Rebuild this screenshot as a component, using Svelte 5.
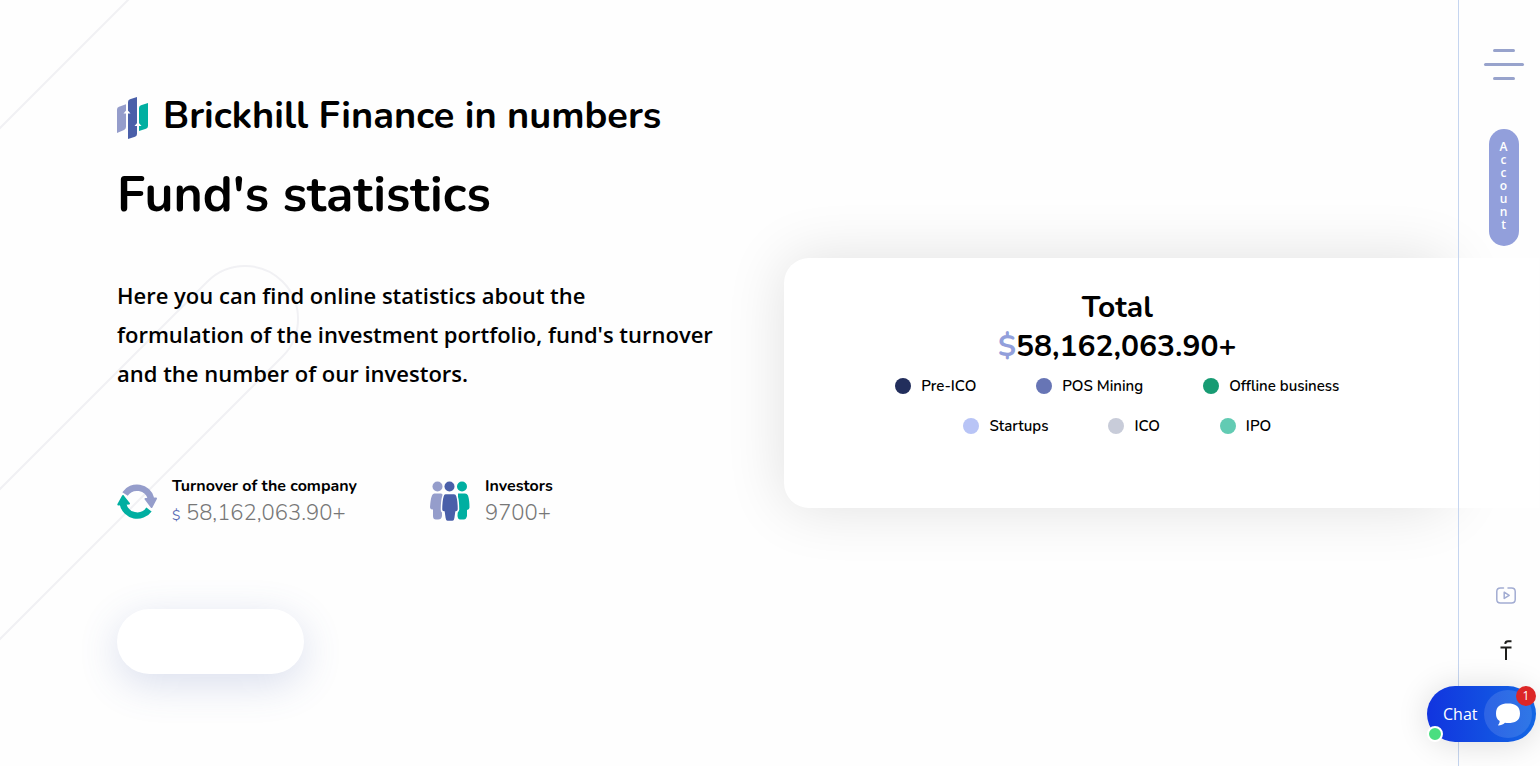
<script>
  const legend = [
    [
      { label: 'Pre-ICO', color: '#222e5c' },
      { label: 'POS Mining', color: '#6775b5' },
      { label: 'Offline business', color: '#179b73' }
    ],
    [
      { label: 'Startups', color: '#b8c4f6' },
      { label: 'ICO', color: '#c8ccd9' },
      { label: 'IPO', color: '#62cbb3' }
    ]
  ];
</script>

<div class="page">
  <svg class="backdrop" width="320" height="680" viewBox="0 0 320 680" aria-hidden="true">
    <path d="M-4 132 132 -4M-4 493 207.500 281.500A53 53 0 0 1 282.500 356.500L-4 643" fill="none" stroke="#f1f1f4" stroke-width="2" />
  </svg>

  <main>
    <section class="intro">
      <h2>
        <svg width="31" height="42" viewBox="0 0 31 42" aria-hidden="true">
          <path d="M0 12.500Q0 10.500 2 9.700L9 7.200V30Q9 32 7 33L0 36Z" fill="#959dcb" />
          <path d="M11 5Q11 3 13 2.300L20 0V37Q20 39 18 39.800L11 42Z" fill="#4a5fa9" />
          <path d="M22 11Q22 9 24 8.300L31 6V29Q31 31 29 31.700L22 34Z" fill="#00afa1" />
          <path d="M10 12.500 13.500 16.500H11V20H9V16.500H6.500ZM21 25 24.500 29H22V33H20V29H17.500Z" fill="#fff" />
        </svg>
        Brickhill Finance in numbers
      </h2>
      <h1>Fund's statistics</h1>
      <p>Here you can find online statistics about the formulation of the investment portfolio, fund's turnover and the number of our investors.</p>
      <div class="stats">
        <div class="stat">
          <svg width="40" height="42" viewBox="0 0 40 42" aria-hidden="true">
            <g fill="none" stroke-width="6.500">
              <path d="M8 14A14.500 14.500 0 0 1 34 18.500" stroke="#959dcb" />
              <path d="M6 24A14.500 14.500 0 0 0 32 29.500" stroke="#00afa1" />
            </g>
            <g stroke-width="2" stroke-linejoin="round">
              <path d="M28.500 19 39 18.500 34.500 27Z" fill="#959dcb" stroke="#959dcb" />
              <path d="M1.300 24.500 6 16 12 23.500Z" fill="#00afa1" stroke="#00afa1" />
            </g>
          </svg>
          <div>
            <h3>Turnover of the company</h3>
            <div class="value"><small>$</small> 58,162,063.90+</div>
          </div>
        </div>
        <div class="stat">
          <svg width="40" height="42" viewBox="0 0 40 42" aria-hidden="true">
            <g fill="#959dcb"><circle cx="7.500" cy="6.500" r="5" /><path d="M4.500 13.500H11Q13 13.500 13 16L11 28 12 33V36Q11.500 39.500 8 39.500H6Q3 39.500 3 36V29.500Q0 29.500 0 27 .5 19 2 15.500 2.800 13.500 4.500 13.500Z" /></g>
            <g fill="#00afa1"><circle cx="32" cy="6.500" r="5" /><path d="M28 13.500H35Q37 13.500 38 15.500 39.500 20 39.500 27.500 39.500 29.500 37 30V36Q36 39.500 34 39.500H30Q28 39.500 27.500 36L28 28Z" /></g>
            <path d="M15.500 13.500H24Q26.500 13.500 27 16 28.500 21 28.500 29.500 28 32 26 32L25 39Q24.500 41.500 22.500 41.500H17.500Q15.500 41.500 15 39L14 32Q11.500 32 11.500 29.500 11.500 21 13 16 13.500 13.500 15.500 13.500Z" fill="#4a5fa9" stroke="#fff" stroke-width="1.500" />
            <circle cx="19.500" cy="6.500" r="5" fill="#4a5fa9" />
          </svg>
          <div>
            <h3>Investors</h3>
            <div class="value">9700+</div>
          </div>
        </div>
      </div>
      <button class="more" type="button" aria-label="More statistics"></button>
    </section>

    <section class="card">
      <div class="total">Total</div>
      <div class="total"><span>$</span>58,162,063.90+</div>
      {#each legend as row}
        <ul>
          {#each row as item}
            <li><i style:background={item.color}></i>{item.label}</li>
          {/each}
        </ul>
      {/each}
    </section>
  </main>

  <aside>
    <button class="menu" type="button" aria-label="Menu"><i></i><i></i><i></i></button>
    <a class="account" href="#account">Account</a>
    <nav>
      <a href="#youtube" aria-label="YouTube">
        <svg width="20" height="17" viewBox="0 0 20 17" fill="none" stroke="#a2acd2" stroke-width="1.500" stroke-linecap="round">
          <path d="M7.500 1H4.500Q.8 1 .8 4.500V12.500Q.8 16 4.500 16H15.500Q19.200 16 19.200 12.500V4.500Q19.200 1 15.500 1H12" />
          <path d="M8.200 5.200V11.400L13.200 8.300Z" stroke-linejoin="round" />
        </svg>
      </a>
      <a href="#facebook" aria-label="Facebook">
        <svg width="12" height="20" viewBox="0 0 12 20" fill="none" stroke="#1d1d1b" stroke-width="2">
          <path d="M.5 7.500H11.500M6 7.500V20" />
          <path d="M5.200 3.800Q5.500 1.200 8 1.200H11.500" />
        </svg>
      </a>
    </nav>
  </aside>

  <button class="chat" type="button">
    <span>Chat</span>
    <span class="bubble">
      <svg width="26" height="23" viewBox="0 0 26 23" aria-hidden="true">
        <path d="M13 .5C20 .5 25 3 25 10.500S20 20 13 20Q11.500 20 10 19.700C8 21.500 5.500 22.500 3.500 22.500 3 22.500 3 22 3.500 21.500Q4.700 20 4.700 18C2 16.500 1 14 1 10.500 1 3 6 .5 13 .5Z" fill="#fff" />
      </svg>
    </span>
    <span class="count">1</span>
    <span class="online"></span>
  </button>
</div>

<style>
  :global(body) {
    margin: 0;
    background: #fefefe;
  }
  .page {
    position: relative;
    display: flex;
    min-height: 100vh;
    overflow: hidden;
    color: #000;
    font-family: Nunito, Lato, sans-serif;
  }
  .backdrop {
    position: absolute;
    top: 0;
    left: 0;
  }
  main {
    position: relative;
    flex: 1;
    display: grid;
    grid-template-columns: 1fr 1fr;
    padding: 0 7px 0 116px;
  }
  .intro {
    padding: 90px 60px 92px 1px;
  }
  h1, h2, h3, p, ul {
    margin: 0;
    padding: 0;
  }
  h2 {
    display: flex;
    align-items: center;
    gap: 15px;
    font-size: 38px;
    line-height: 52px;
    white-space: nowrap;
  }
  h2 svg {
    margin-top: 4px;
  }
  h1 {
    margin-top: 21px;
    font-size: 50px;
    line-height: 64px;
  }
  p {
    max-width: 600px;
    margin-top: 49px;
    font: 600 22px/39px "Open Sans", sans-serif;
  }
  .stats {
    display: flex;
    gap: 73px;
    margin-top: 81px;
  }
  .stat {
    display: flex;
    align-items: flex-start;
    gap: 15px;
  }
  .stat svg {
    margin-top: 6px;
  }
  h3 {
    font-size: 16px;
    line-height: 24px;
  }
  .value {
    font-size: 22px;
    font-weight: 300;
    line-height: 30px;
    color: #777;
  }
  small {
    font-size: 14px;
    font-weight: 400;
    line-height: 20px;
    color: #5b6db5;
  }
  .more {
    display: block;
    width: 187px;
    height: 65px;
    margin-top: 81px;
    border: 0;
    border-radius: 33px;
    background: #fff;
    box-shadow: 0 10px 40px rgba(72, 94, 170, 0.2);
  }
  .card {
    position: relative;
    align-self: center;
    box-sizing: border-box;
    min-height: 250px;
    padding: 30px 20px;
    border-radius: 25px;
    background: #fff;
    box-shadow: 0 0 60px rgba(0, 0, 0, 0.12);
  }
  .card::after {
    content: "";
    position: absolute;
    inset: 0 -88px 0 auto;
    width: 120px;
    background: #fff;
  }
  .total {
    font-size: 30px;
    font-weight: 700;
    line-height: 39px;
    text-align: center;
  }
  .total span {
    color: #929fdb;
  }
  ul {
    display: flex;
    justify-content: center;
    gap: 60px;
    list-style: none;
  }
  li {
    display: flex;
    align-items: center;
    gap: 10px;
    font-size: 15px;
    font-weight: 600;
    line-height: 40px;
  }
  li i {
    width: 16px;
    height: 16px;
    border-radius: 50%;
  }
  aside {
    position: relative;
    box-sizing: border-box;
    width: 82px;
    display: flex;
    flex-direction: column;
    align-items: center;
    padding: 49px 0 106px 8px;
    border-left: 1px solid #c5d5f0;
  }
  .menu {
    display: flex;
    flex-direction: column;
    align-items: center;
    gap: 11px;
    padding: 0;
    border: 0;
    background: none;
  }
  .menu i {
    width: 22px;
    height: 3px;
    border-radius: 2px;
    background: #98a3cc;
  }
  .menu i:nth-child(2) {
    width: 40px;
  }
  .account {
    width: 8px;
    margin-top: 49px;
    padding: 11px 11px 15px;
    border-radius: 15px;
    background: #929fdb;
    color: #fff;
    font: 600 12px/13px "Open Sans", sans-serif;
    text-align: center;
    text-decoration: none;
    word-break: break-all;
  }
  nav {
    display: flex;
    flex-direction: column;
    align-items: center;
    gap: 36px;
    margin-top: auto;
    padding-left: 4px;
  }
  nav a, nav svg {
    display: block;
  }
  .chat {
    position: absolute;
    right: 4px;
    bottom: 24px;
    display: flex;
    align-items: center;
    justify-content: space-between;
    width: 109px;
    height: 56px;
    padding: 0 4px 0 16px;
    border: 0;
    border-radius: 28px;
    background: linear-gradient(90deg, #1134df, #1366e4);
    box-shadow: 0 2px 32px rgba(0, 0, 0, 0.14);
    color: #fff;
    font: 16px/24px "Open Sans", sans-serif;
  }
  .bubble {
    display: grid;
    place-items: center;
    width: 48px;
    height: 48px;
    border-radius: 50%;
    background: rgba(255, 255, 255, 0.12);
  }
  .count {
    position: absolute;
    top: 0;
    right: 0;
    width: 20px;
    height: 20px;
    border-radius: 50%;
    background: #dc2626;
    font-size: 12px;
    line-height: 20px;
  }
  .online {
    position: absolute;
    left: 0;
    bottom: 0;
    width: 12px;
    height: 12px;
    border: 2px solid #fff;
    border-radius: 50%;
    background: #4ade80;
  }
</style>
